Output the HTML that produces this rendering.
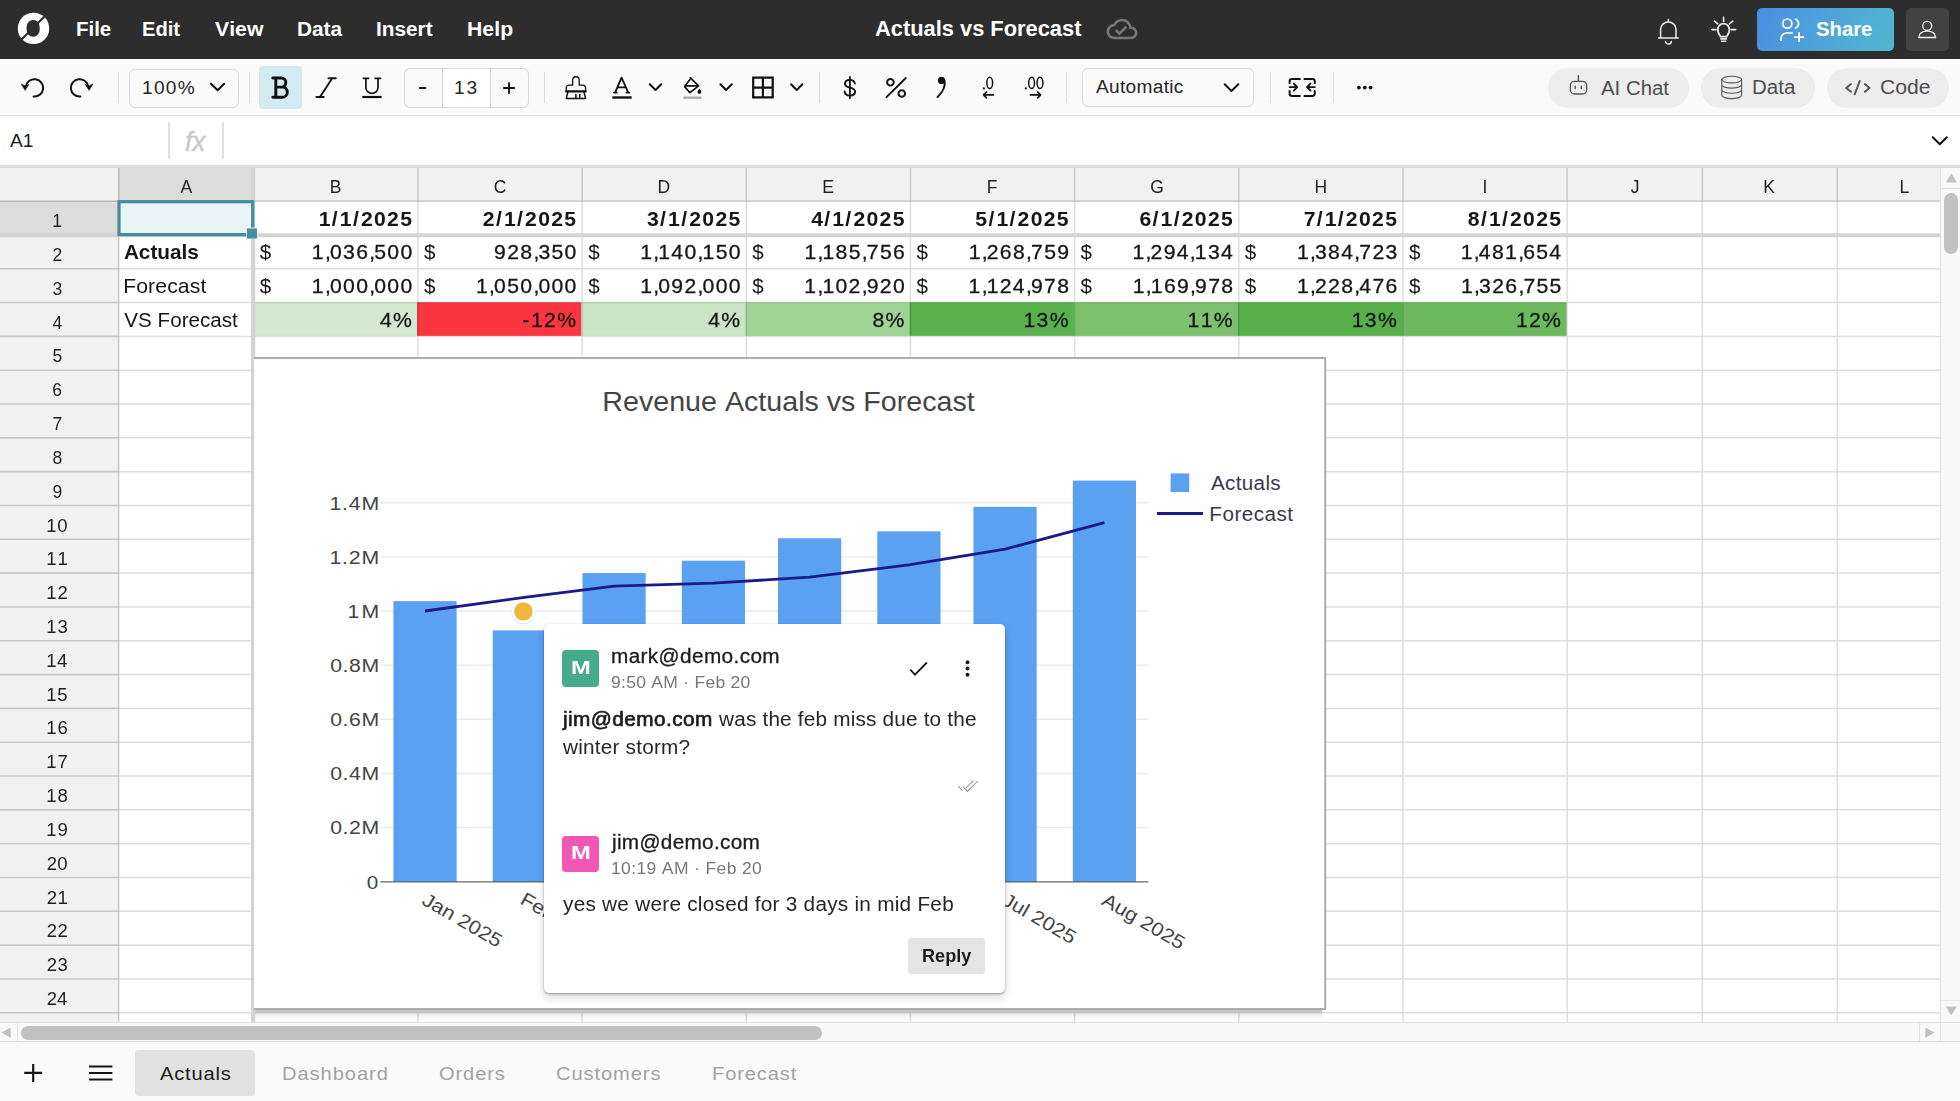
<!DOCTYPE html>
<html lang="en"><head><meta charset="utf-8"><title>Actuals vs Forecast</title>
<style>
html,body{margin:0;padding:0}
body{width:1960px;height:1101px;overflow:hidden;position:relative;background:#fff;font-family:"Liberation Sans",sans-serif;font-kerning:none}
.a{position:absolute}
.t{position:absolute;white-space:nowrap;line-height:1;transform-origin:0 50%}
.gl{will-change:transform}
svg{position:absolute;overflow:visible}
svg text{font-family:"Liberation Sans",sans-serif;font-kerning:none}
</style></head><body>
<div class="a" style="left:0px;top:0px;width:1960px;height:59px;background:#2d2d2d"></div>
<div class="a" style="left:1757.2px;top:7.9px;width:136.5px;height:42.9px;background:linear-gradient(115deg,#4a8de0 0%,#4fa6d8 55%,#51b8cf 100%);border-radius:5px"></div>
<div class="a" style="left:1906px;top:8px;width:43px;height:43px;background:#424242;border-radius:5px"></div>
<span class="t" style="left:75.53px;top:19.47px;font-size:20px;color:#ffffff;font-weight:700;transform:scaleX(1.0206);">File</span>
<span class="t" style="left:141.95px;top:19.47px;font-size:20px;color:#ffffff;font-weight:700;transform:scaleX(1.0058);">Edit</span>
<span class="t" style="left:214.86px;top:19.47px;font-size:20px;color:#ffffff;font-weight:700;letter-spacing:0.029px;transform:scaleX(1.0600);">View</span>
<span class="t" style="left:296.61px;top:19.47px;font-size:20px;color:#ffffff;font-weight:700;transform:scaleX(1.0394);">Data</span>
<span class="t" style="left:376.41px;top:19.47px;font-size:20px;color:#ffffff;font-weight:700;transform:scaleX(1.0382);">Insert</span>
<span class="t" style="left:466.58px;top:19.47px;font-size:20px;color:#ffffff;font-weight:700;letter-spacing:0.046px;transform:scaleX(1.0600);">Help</span>
<span class="t" style="left:875.46px;top:18.08px;font-size:22px;color:#ffffff;font-weight:700;transform:scaleX(0.9930);">Actuals vs Forecast</span>
<span class="t" style="left:1816.02px;top:19.27px;font-size:20px;color:#ffffff;font-weight:700;transform:scaleX(1.0142);">Share</span>
<div class="a" style="left:0px;top:59px;width:1960px;height:56px;background:#fafafa"></div>
<div class="a" style="left:0px;top:115px;width:1960px;height:1px;background:#dddddd"></div>
<div class="a" style="left:128.5px;top:68.5px;width:110px;height:39px;box-sizing:border-box;border:1px solid #d9d9d9;border-radius:6px;background:#fafafa"></div>
<span class="t" style="left:142.05px;top:79.06px;font-size:18px;color:#262626;letter-spacing:1.206px;transform:scaleX(1.0600);">100%</span>
<div class="a" style="left:259.3px;top:66.2px;width:43px;height:42.6px;background:#d3ebf0;border-radius:4px"></div>
<div class="a" style="left:404.2px;top:68.2px;width:124.5px;height:39.4px;box-sizing:border-box;border:1px solid #d9d9d9;border-radius:6px;background:#fafafa;overflow:hidden"></div>
<div class="a" style="left:442.2px;top:69.2px;width:48.4px;height:37.4px;background:#ffffff;border-left:1px solid #d9d9d9;border-right:1px solid #d9d9d9;box-sizing:border-box"></div>
<span class="t" style="left:454.25px;top:79.06px;font-size:18px;color:#262626;letter-spacing:1.669px;transform:scaleX(1.0600);">13</span>
<div class="a" style="left:1082.2px;top:68.2px;width:171.6px;height:38.6px;box-sizing:border-box;border:1px solid #d9d9d9;border-radius:6px;background:#fafafa"></div>
<span class="t" style="left:1095.76px;top:78.36px;font-size:18px;color:#262626;letter-spacing:0.295px;transform:scaleX(1.0600);">Automatic</span>
<div class="a" style="left:117.89999999999999px;top:72px;width:1.5px;height:31px;background:#dcdcdc"></div>
<div class="a" style="left:248.60000000000002px;top:72px;width:1.5px;height:31px;background:#dcdcdc"></div>
<div class="a" style="left:543.8px;top:72px;width:1.5px;height:31px;background:#dcdcdc"></div>
<div class="a" style="left:818.5px;top:72px;width:1.5px;height:31px;background:#dcdcdc"></div>
<div class="a" style="left:1065.5px;top:72px;width:1.5px;height:31px;background:#dcdcdc"></div>
<div class="a" style="left:1269.5px;top:72px;width:1.5px;height:31px;background:#dcdcdc"></div>
<div class="a" style="left:1332.7px;top:72px;width:1.5px;height:31px;background:#dcdcdc"></div>
<div class="a" style="left:1548px;top:68px;width:141px;height:40px;background:#ededed;border-radius:20px"></div>
<div class="a" style="left:1701px;top:68px;width:113.70000000000005px;height:40px;background:#ededed;border-radius:20px"></div>
<div class="a" style="left:1827px;top:68px;width:122px;height:40px;background:#ededed;border-radius:20px"></div>
<span class="t" style="left:1601.46px;top:77.57px;font-size:20px;color:#4d4d4d;transform:scaleX(1.0193);">AI Chat</span>
<span class="t" style="left:1752.22px;top:77.47px;font-size:20px;color:#4d4d4d;transform:scaleX(1.0245);">Data</span>
<span class="t" style="left:1879.52px;top:77.47px;font-size:20px;color:#4d4d4d;transform:scaleX(1.0586);">Code</span>
<div class="a" style="left:0px;top:116px;width:1960px;height:49px;background:#ffffff"></div>
<div class="a" style="left:0px;top:165px;width:1960px;height:3px;background:#dddddd"></div>
<span class="t" style="left:10.36px;top:132.14px;font-size:18.5px;color:#1a1a1a;transform:scaleX(1.0374);">A1</span>
<div class="a" style="left:168.3px;top:122.3px;width:1.7px;height:36.4px;background:#dedede"></div>
<div class="a" style="left:222.3px;top:122.3px;width:1.7px;height:36.4px;background:#dedede"></div>
<span class="t" style="left:185.01px;top:128.74px;font-size:27px;color:#c9c9c9;font-style:italic;transform:scaleX(0.9769);-webkit-text-stroke:0.4px #c9c9c9;">fx</span>
<svg width="1960" height="170" viewBox="0 0 1960 170" style="left:0;top:0"><circle cx="33.5" cy="28.4" r="15.7" fill="#ffffff"/><rect x="26.6" y="20" width="13.1" height="16.8" rx="6.3" ry="7.2" fill="#2d2d2d"/><path d="M16.5 44.6 L50.5 10.6" stroke="#2d2d2d" stroke-width="2.1" fill="none"/><path transform="translate(1106.6 13.56) scale(1.285)" fill="#787878" d="M19.35 10.04C18.67 6.59 15.64 4 12 4 9.11 4 6.6 5.64 5.35 8.04 2.34 8.36 0 10.91 0 14c0 3.31 2.69 6 6 6h13c2.76 0 5-2.24 5-5 0-2.64-2.05-4.78-4.65-4.96zM19 18H6c-2.21 0-4-1.79-4-4 0-2.05 1.53-3.76 3.56-3.97l1.07-.11.5-.95C8.08 7.14 9.94 6 12 6c2.62 0 4.88 1.86 5.39 4.43l.3 1.5 1.53.11c1.56.1 2.78 1.41 2.78 2.96 0 1.65-1.35 3-3 3zm-9-3.82l-2.09-2.09L6.500 13.5 10 17l6.010-6.010-1.410-1.410z"/><path d="M1660.6 37.6 V29.6 a7.7 7.7 0 0 1 15.4 0 V37.6 M1658.6 38 H1678.2 M1668.3 21.8 V19.6" stroke="#ececec" stroke-width="1.5" fill="none" stroke-linecap="round" stroke-linejoin="round"/><path d="M1665.5 41.4 a2.9 2.6 0 0 0 5.8 0" stroke="#ececec" stroke-width="1.5" fill="none" stroke-linecap="round" stroke-linejoin="round"/><path d="M1720.4 36.6 c-0.3 -1.6 -2.6 -3 -2.6 -7.2 a5.8 5.8 0 0 1 11.6 0 c0 4.2 -2.3 5.6 -2.6 7.2 z" stroke="#ececec" stroke-width="1.8" fill="none" stroke-linecap="round" stroke-linejoin="round"/><path d="M1720.9 38.9 H1726.4 M1721.6 41.2 H1725.7" stroke="#ececec" stroke-width="1.6" fill="none" stroke-linecap="round" stroke-linejoin="round"/><path d="M1723.6 17.2 V21.4 M1714.4 21.2 L1717.9 23.8 M1732.8 21.2 L1729.4 23.8 M1711.7 29.6 H1716 M1731.1 29.6 H1735.7" stroke="#ececec" stroke-width="1.6" fill="none" stroke-linecap="round" stroke-linejoin="round"/><circle cx="1787.3" cy="23.6" r="4.6" stroke="#fff" stroke-width="1.7" fill="none"/><path d="M1795.6 19.3 a4.6 4.6 0 0 1 0 8.6" stroke="#fff" stroke-width="1.7" fill="none" stroke-linecap="round" stroke-linejoin="round"/><path d="M1781 40.2 v-1.6 a5.6 5.6 0 0 1 5.6 -5.6 h5.8" stroke="#fff" stroke-width="1.7" fill="none" stroke-linecap="round" stroke-linejoin="round"/><path d="M1794.8 37.1 H1803.4 M1799.1 32.8 V41.3" stroke="#fff" stroke-width="1.8" fill="none" stroke-linecap="round" stroke-linejoin="round"/><circle cx="1927.2" cy="25.9" r="4.5" stroke="#f0f0f0" stroke-width="1.4" fill="none"/><path d="M1918.8 37.5 c0.3 -4.2 3.6 -6.4 8.4 -6.4 s8.1 2.2 8.4 6.4 z" stroke="#f0f0f0" stroke-width="1.4" fill="none" stroke-linecap="round" stroke-linejoin="round"/><path d="M33.6 96.5 A8.7 8.7 0 1 0 25.9 86.4" stroke="#111111" stroke-width="2" fill="none" stroke-linecap="round" stroke-linejoin="round"/><path d="M21.2 83.9 L25.1 90.4 L29.1 84.3 L25.5 85.9 Z" fill="#111111" stroke="#111111" stroke-width="0.5" stroke-linejoin="round"/><path d="M80.4 96.5 A8.7 8.7 0 1 1 88.1 86.4" stroke="#111111" stroke-width="2" fill="none" stroke-linecap="round" stroke-linejoin="round"/><path d="M93 83.9 L89.1 90.4 L85.1 84.3 L88.7 85.9 Z" fill="#111111" stroke="#111111" stroke-width="0.5" stroke-linejoin="round"/><path d="M211 83.7 L217.6 90.3 L224.2 83.7" stroke="#111111" stroke-width="2" fill="none" stroke-linecap="round" stroke-linejoin="round"/><path d="M272.8 78 H281.3 a4.5 4.5 0 0 1 0 9.1 H275.8 M275.8 87.1 H282.2 a5.1 5.1 0 0 1 0 10.2 H272.8 M275.8 78 V97.3" stroke="#111111" stroke-width="2.9" fill="none" stroke-linecap="round" stroke-linejoin="round"/><path d="M328.4 78.3 H335.8 M316.4 97 H323.8 M332.2 78.3 L320 97" stroke="#111111" stroke-width="1.9" fill="none" stroke-linecap="round" stroke-linejoin="round"/><path d="M363.4 78.3 H368.6 M375.2 78.3 H380.5 M365.9 78.3 V87.4 a6.05 6.05 0 0 0 12.1 0 V78.3" stroke="#111111" stroke-width="1.7" fill="none" stroke-linecap="round" stroke-linejoin="round"/><path d="M362.3 97 H381.6" stroke="#111111" stroke-width="2.2" fill="none" stroke-linecap="round" stroke-linejoin="round" style="stroke-linecap:butt"/><path d="M419.8 88 H425.5" stroke="#111111" stroke-width="1.8" fill="none" stroke-linecap="round" stroke-linejoin="round"/><path d="M503.8 88 H514.3 M509 82.8 V93.3" stroke="#111111" stroke-width="1.8" fill="none" stroke-linecap="round" stroke-linejoin="round"/><path d="M572.7 85.2 V80 a3.25 3.25 0 0 1 6.5 0 V85.2 H582.6 a3 3 0 0 1 3 3 V91.2 H566.2 V88.2 a3 3 0 0 1 3 -3 Z" stroke="#111111" stroke-width="1.3" fill="none" stroke-linecap="round" stroke-linejoin="round"/><path d="M566 91.4 H585.8" stroke="#111111" stroke-width="2" fill="none" stroke-linecap="round" stroke-linejoin="round"/><path d="M567.9 91.6 L566.3 98.4 H585.5 L583.9 91.6 M575.9 98.2 V94.4 M579.8 98.2 V94.4" stroke="#111111" stroke-width="1.5" fill="none" stroke-linecap="round" stroke-linejoin="round"/><path d="M615.2 92.4 L621.6 77.6 L628.1 92.4 M618.2 87.3 H625 M613.9 92.6 H616.8 M626.4 92.6 H629.3" stroke="#111111" stroke-width="1.8" fill="none" stroke-linecap="round" stroke-linejoin="round"/><path d="M612.3 97.5 H631.7" stroke="#111111" stroke-width="2.4" fill="none" stroke-linecap="round" stroke-linejoin="round" style="stroke-linecap:butt"/><path d="M649.8 84.3 L655.5 90 L661.2 84.3" stroke="#111111" stroke-width="2" fill="none" stroke-linecap="round" stroke-linejoin="round"/><path d="M720.4 84.3 L726.1 90 L731.8000000000001 84.3" stroke="#111111" stroke-width="2" fill="none" stroke-linecap="round" stroke-linejoin="round"/><path d="M791.0 84.3 L796.7 90 L802.4000000000001 84.3" stroke="#111111" stroke-width="2" fill="none" stroke-linecap="round" stroke-linejoin="round"/><path d="M690.9 78.3 L698.6 85.9 L690 92.7 L684.6 86.6 Z M685.4 85.9 H698 M690.3 77.7 L692.8 80.2" stroke="#111111" stroke-width="1.7" fill="none" stroke-linecap="round" stroke-linejoin="round"/><path d="M699.4 88.4 c1.2 1.6 1.9 2.6 1.9 3.5 a1.9 1.9 0 0 1 -3.8 0 c0 -0.9 0.7 -1.9 1.9 -3.5z" fill="#111111"/><path d="M683.4 97.7 H701.6" stroke="#a9a9a9" stroke-width="2.3" fill="none" stroke-linecap="round" stroke-linejoin="round" style="stroke-linecap:butt"/><path d="M753.2 77.7 H772.7 V97.4 H753.2 Z M762.9 77.7 V97.4 M753.2 87.6 H772.7" stroke="#111111" stroke-width="2.2" fill="none" stroke-linecap="round" stroke-linejoin="round" style="stroke-linecap:butt;stroke-linejoin:miter"/><path d="M849.9 76.9 V98.3" stroke="#111111" stroke-width="1.8" fill="none" stroke-linecap="round" stroke-linejoin="round"/><path d="M854.9 83.6 C854.3 80.8 852 79.9 849.9 79.9 C846.7 79.9 845 81.8 845 83.9 C845 88.9 855.1 86.4 855.1 91.6 C855.1 94 852.9 95.6 849.9 95.6 C846.9 95.6 844.9 94 844.6 91.4" stroke="#111111" stroke-width="1.9" fill="none" stroke-linecap="round" stroke-linejoin="round"/><path d="M905.8 78 L886.5 97.2" stroke="#111111" stroke-width="1.9" fill="none" stroke-linecap="round" stroke-linejoin="round"/><circle cx="890.4" cy="82.3" r="3.3" stroke="#111111" stroke-width="1.9" fill="none"/><circle cx="901.8" cy="93.5" r="3.3" stroke="#111111" stroke-width="1.9" fill="none"/><circle cx="941.5" cy="80.4" r="3.6" fill="#111111"/><path d="M944.6 81 C945.6 87.5 942.2 92.6 937.6 97" stroke="#111111" stroke-width="2" fill="none" stroke-linecap="round" stroke-linejoin="round"/><circle cx="983.9" cy="88.4" r="1.1" fill="#111111"/><ellipse cx="989.7" cy="82.9" rx="2.9" ry="5.6" stroke="#111111" stroke-width="1.5" fill="none"/><path d="M993.4 94.9 H983.8 M986.5 92 L983.6 94.9 L986.5 97.8" stroke="#111111" stroke-width="1.7" fill="none" stroke-linecap="round" stroke-linejoin="round"/><circle cx="1025.8" cy="88.4" r="1.1" fill="#111111"/><ellipse cx="1031.6" cy="82.9" rx="2.9" ry="5.6" stroke="#111111" stroke-width="1.5" fill="none"/><ellipse cx="1040" cy="82.9" rx="2.9" ry="5.6" stroke="#111111" stroke-width="1.5" fill="none"/><path d="M1030.5 94.9 H1040.4 M1037.7 92 L1040.6 94.9 L1037.7 97.8" stroke="#111111" stroke-width="1.7" fill="none" stroke-linecap="round" stroke-linejoin="round"/><path d="M1224.7 84.2 L1231.5 91 L1238.3 84.2" stroke="#111111" stroke-width="2" fill="none" stroke-linecap="round" stroke-linejoin="round"/><path d="M1299.9 79.1 H1292 a2.4 2.4 0 0 0 -2.4 2.4 V83.2 M1289.6 91 V93.5 a2.4 2.4 0 0 0 2.4 2.4 H1299.9 M1304.4 79.1 H1312.4 a2.4 2.4 0 0 1 2.4 2.4 V83.2 M1314.8 91 V93.5 a2.4 2.4 0 0 1 -2.4 2.4 H1304.4" stroke="#111111" stroke-width="2" fill="none" stroke-linecap="round" stroke-linejoin="round"/><path d="M1289.6 87.1 H1297 M1293.8 83.6 L1297.3 87.1 L1293.8 90.6 M1314.8 87.1 H1307.4 M1310.5 83.6 L1307 87.1 L1310.5 90.6" stroke="#111111" stroke-width="1.9" fill="none" stroke-linecap="round" stroke-linejoin="round"/><circle cx="1358.9" cy="87.6" r="1.9" fill="#111111"/><circle cx="1364.8" cy="87.6" r="1.9" fill="#111111"/><circle cx="1370.6" cy="87.6" r="1.9" fill="#111111"/><rect x="1570.4" y="81.3" width="16.2" height="12.7" rx="4" stroke="#555555" stroke-width="1.3" fill="none"/><path d="M1578.4 75.8 V81 M1575.3 86.3 V88.6 M1581.3 86.3 V88.6" stroke="#555555" stroke-width="1.4" fill="none" stroke-linecap="round" stroke-linejoin="round"/><ellipse cx="1731.7" cy="79.6" rx="9.9" ry="3.3" stroke="#555555" stroke-width="1.1" fill="none"/><path d="M1721.8 79.6 V95.3 a9.9 3.3 0 0 0 19.8 0 V79.6 M1721.8 84.8 a9.9 3.3 0 0 0 19.8 0 M1721.8 90 a9.9 3.3 0 0 0 19.8 0" stroke="#555555" stroke-width="1.1" fill="none" stroke-linecap="round" stroke-linejoin="round"/><path d="M1851 84 L1846.2 87.9 L1851 91.8 M1859.8 80.9 L1854.7 94.3 M1864.8 84 L1869.6 87.9 L1864.8 91.8" stroke="#555555" stroke-width="1.9" fill="none" stroke-linecap="round" stroke-linejoin="round"/><path d="M1932.8 137.3 L1939.8 144.2 L1946.8 137.3" stroke="#111111" stroke-width="2" fill="none" stroke-linecap="round" stroke-linejoin="round"/></svg>
<div class="a gl" style="left:0;top:0;width:1960px;height:1101px"><svg width="1960" height="1101" viewBox="0 0 1960 1101" style="left:0;top:0"><defs><linearGradient id="sh" x1="0" y1="0" x2="0" y2="1"><stop offset="0" stop-color="#000" stop-opacity="0.09"/><stop offset="1" stop-color="#000" stop-opacity="0"/></linearGradient><clipPath id="gc"><rect x="0" y="168" width="1940" height="854"/></clipPath></defs><g clip-path="url(#gc)"><rect x="0" y="168.0" width="1940" height="854.0" fill="#ffffff"/><rect x="0" y="168.0" width="1940" height="33.099999999999994" fill="#f1f1f1"/><rect x="0" y="168.0" width="118.7" height="854.0" fill="#f1f1f1"/><rect x="118.7" y="168.0" width="135.14" height="33.099999999999994" fill="#dcdcdc"/><rect x="0" y="201.1" width="118.7" height="33.82" fill="#dcdcdc"/><rect x="252.94" y="302.26" width="164.46" height="33.62" fill="#d5e8d0"/><rect x="417.10" y="302.26" width="164.46" height="33.62" fill="#fb3640"/><rect x="581.26" y="302.26" width="164.46" height="33.62" fill="#cbe5c6"/><rect x="745.42" y="302.26" width="164.46" height="33.62" fill="#a0d396"/><rect x="909.58" y="302.26" width="164.46" height="33.62" fill="#5ab14b"/><rect x="1073.74" y="302.26" width="164.46" height="33.62" fill="#7bc16e"/><rect x="1237.90" y="302.26" width="164.46" height="33.62" fill="#59b04a"/><rect x="1402.06" y="302.26" width="164.46" height="33.62" fill="#6cb85c"/><path d="M118.7 234.92H1940M118.7 268.74H1940M118.7 302.56H1940M118.7 336.38H1940M118.7 370.20H1940M118.7 404.02H1940M118.7 437.84H1940M118.7 471.66H1940M118.7 505.48H1940M118.7 539.30H1940M118.7 573.12H1940M118.7 606.94H1940M118.7 640.76H1940M118.7 674.58H1940M118.7 708.40H1940M118.7 742.22H1940M118.7 776.04H1940M118.7 809.86H1940M118.7 843.68H1940M118.7 877.50H1940M118.7 911.32H1940M118.7 945.14H1940M118.7 978.96H1940M118.7 1012.78H1940M253.84 201.1V1022M418.00 201.1V1022M582.16 201.1V1022M746.32 201.1V1022M910.48 201.1V1022M1074.64 201.1V1022M1238.80 201.1V1022M1402.96 201.1V1022M1567.12 201.1V1022M1702.30 201.1V1022M1837.30 201.1V1022" stroke="#000" stroke-opacity="0.135" stroke-width="1.5" fill="none"/><path d="M0 201.10H118.7M0 234.92H118.7M0 268.74H118.7M0 302.56H118.7M0 336.38H118.7M0 370.20H118.7M0 404.02H118.7M0 437.84H118.7M0 471.66H118.7M0 505.48H118.7M0 539.30H118.7M0 573.12H118.7M0 606.94H118.7M0 640.76H118.7M0 674.58H118.7M0 708.40H118.7M0 742.22H118.7M0 776.04H118.7M0 809.86H118.7M0 843.68H118.7M0 877.50H118.7M0 911.32H118.7M0 945.14H118.7M0 978.96H118.7M0 1012.78H118.7M118.70 168.0V201.1M253.84 168.0V201.1M418.00 168.0V201.1M582.16 168.0V201.1M746.32 168.0V201.1M910.48 168.0V201.1M1074.64 168.0V201.1M1238.80 168.0V201.1M1402.96 168.0V201.1M1567.12 168.0V201.1M1702.30 168.0V201.1M1837.30 168.0V201.1M118.7 201.1V1022M118.7 201.1H1940" stroke="#000" stroke-opacity="0.17" stroke-width="1.6" fill="none"/><rect x="0" y="233.3" width="1940" height="3.9" fill="#d3d3d3"/><rect x="251.1" y="168.0" width="4.1" height="854.0" fill="#d3d3d3"/><text x="180.43" y="192.90" font-size="17.5" fill="#1f1f1f">A</text><text x="329.83" y="192.90" font-size="17.5" fill="#1f1f1f">B</text><text x="493.65" y="192.90" font-size="17.5" fill="#1f1f1f">C</text><text x="657.62" y="192.90" font-size="17.5" fill="#1f1f1f">D</text><text x="822.22" y="192.90" font-size="17.5" fill="#1f1f1f">E</text><text x="986.85" y="192.90" font-size="17.5" fill="#1f1f1f">F</text><text x="1150.13" y="192.90" font-size="17.5" fill="#1f1f1f">G</text><text x="1314.56" y="192.90" font-size="17.5" fill="#1f1f1f">H</text><text x="1482.61" y="192.90" font-size="17.5" fill="#1f1f1f">I</text><text x="1630.85" y="192.90" font-size="17.5" fill="#1f1f1f">J</text><text x="1763.34" y="192.90" font-size="17.5" fill="#1f1f1f">K</text><text x="1899.51" y="192.90" font-size="17.5" fill="#1f1f1f">L</text><text x="52.19" y="227.12" font-size="17.5" fill="#1f1f1f">1</text><text x="52.43" y="260.94" font-size="17.5" fill="#1f1f1f">2</text><text x="52.48" y="294.76" font-size="17.5" fill="#1f1f1f">3</text><text x="52.49" y="328.58" font-size="17.5" fill="#1f1f1f">4</text><text x="52.45" y="362.40" font-size="17.5" fill="#1f1f1f">5</text><text x="52.37" y="396.22" font-size="17.5" fill="#1f1f1f">6</text><text x="52.43" y="430.04" font-size="17.5" fill="#1f1f1f">7</text><text x="52.43" y="463.86" font-size="17.5" fill="#1f1f1f">8</text><text x="52.44" y="497.68" font-size="17.5" fill="#1f1f1f">9</text><text transform="translate(46.29 531.50) scale(1.0600 1)" font-size="17.5" fill="#1f1f1f" letter-spacing="0.664">10</text><text transform="translate(46.29 565.32) scale(1.0600 1)" font-size="17.5" fill="#1f1f1f" letter-spacing="0.835">11</text><text transform="translate(46.29 599.14) scale(1.0600 1)" font-size="17.5" fill="#1f1f1f" letter-spacing="0.861">12</text><text transform="translate(46.29 632.96) scale(1.0600 1)" font-size="17.5" fill="#1f1f1f" letter-spacing="0.750">13</text><text transform="translate(46.29 666.78) scale(1.0600 1)" font-size="17.5" fill="#1f1f1f" letter-spacing="0.494">14</text><text transform="translate(46.29 700.60) scale(1.0600 1)" font-size="17.5" fill="#1f1f1f" letter-spacing="0.716">15</text><text transform="translate(46.29 734.42) scale(1.0600 1)" font-size="17.5" fill="#1f1f1f" letter-spacing="0.750">16</text><text transform="translate(46.29 768.24) scale(1.0600 1)" font-size="17.5" fill="#1f1f1f" letter-spacing="0.861">17</text><text transform="translate(46.29 802.06) scale(1.0600 1)" font-size="17.5" fill="#1f1f1f" letter-spacing="0.741">18</text><text transform="translate(46.29 835.88) scale(1.0600 1)" font-size="17.5" fill="#1f1f1f" letter-spacing="0.810">19</text><text transform="translate(46.77 869.70) scale(1.0600 1)" font-size="17.5" fill="#1f1f1f" letter-spacing="0.212">20</text><text transform="translate(46.77 903.52) scale(1.0600 1)" font-size="17.5" fill="#1f1f1f" letter-spacing="0.382">21</text><text transform="translate(46.77 937.34) scale(1.0600 1)" font-size="17.5" fill="#1f1f1f" letter-spacing="0.408">22</text><text transform="translate(46.77 971.16) scale(1.0600 1)" font-size="17.5" fill="#1f1f1f" letter-spacing="0.297">23</text><text transform="translate(46.77 1004.98) scale(1.0600 1)" font-size="17.5" fill="#1f1f1f" letter-spacing="0.041">24</text><text transform="scale(1.06 1)" x="300.66 313.02 320.57 332.92 340.47 352.83 365.19 377.55" y="226.01" font-size="20" fill="#161616" font-weight="700">1/1/2025</text><text transform="scale(1.06 1)" x="294.19 306.54 311.26 323.62 335.98 348.34 353.05 365.41 377.77" y="259.13" font-size="20" fill="#161616" stroke="#161616" stroke-width="0.3">1,036,500</text><text transform="scale(1.06 1)" x="294.19 306.54 311.26 323.62 335.98 348.34 353.05 365.41 377.77" y="292.95" font-size="20" fill="#161616" stroke="#161616" stroke-width="0.3">1,000,000</text><text transform="scale(1.06 1)" x="358.40 370.76" y="326.77" font-size="20" fill="#161616" stroke="#161616" stroke-width="0.3">4%</text><text transform="translate(259.82 259.13) scale(1.0297 1)" font-size="20" fill="#161616">$</text><text transform="translate(259.82 292.95) scale(1.0297 1)" font-size="20" fill="#161616">$</text><text transform="scale(1.06 1)" x="455.53 467.89 475.43 487.79 495.34 507.70 520.06 532.41" y="226.01" font-size="20" fill="#161616" font-weight="700">2/1/2025</text><text transform="scale(1.06 1)" x="466.13 478.49 490.85 503.21 507.92 520.28 532.64" y="259.13" font-size="20" fill="#161616" stroke="#161616" stroke-width="0.3">928,350</text><text transform="scale(1.06 1)" x="449.05 461.41 466.13 478.49 490.85 503.21 507.92 520.28 532.64" y="292.95" font-size="20" fill="#161616" stroke="#161616" stroke-width="0.3">1,050,000</text><text transform="scale(1.06 1)" x="492.70 500.91 513.27 525.63" y="326.77" font-size="20" fill="#161616" stroke="#161616" stroke-width="0.3">-12%</text><text transform="translate(423.98 259.13) scale(1.0297 1)" font-size="20" fill="#161616">$</text><text transform="translate(423.98 292.95) scale(1.0297 1)" font-size="20" fill="#161616">$</text><text transform="scale(1.06 1)" x="610.40 622.75 630.30 642.66 650.21 662.57 674.92 687.28" y="226.01" font-size="20" fill="#161616" font-weight="700">3/1/2025</text><text transform="scale(1.06 1)" x="603.92 616.28 621.00 633.36 645.71 658.07 662.79 675.15 687.51" y="259.13" font-size="20" fill="#161616" stroke="#161616" stroke-width="0.3">1,140,150</text><text transform="scale(1.06 1)" x="603.92 616.28 621.00 633.36 645.71 658.07 662.79 675.15 687.51" y="292.95" font-size="20" fill="#161616" stroke="#161616" stroke-width="0.3">1,092,000</text><text transform="scale(1.06 1)" x="668.14 680.50" y="326.77" font-size="20" fill="#161616" stroke="#161616" stroke-width="0.3">4%</text><text transform="translate(588.14 259.13) scale(1.0297 1)" font-size="20" fill="#161616">$</text><text transform="translate(588.14 292.95) scale(1.0297 1)" font-size="20" fill="#161616">$</text><text transform="scale(1.06 1)" x="765.26 777.62 785.17 797.53 805.08 817.43 829.79 842.15" y="226.01" font-size="20" fill="#161616" font-weight="700">4/1/2025</text><text transform="scale(1.06 1)" x="758.89 771.25 775.96 788.32 800.68 813.04 817.76 830.11 842.47" y="259.13" font-size="20" fill="#161616" stroke="#161616" stroke-width="0.3">1,185,756</text><text transform="scale(1.06 1)" x="758.79 771.15 775.87 788.22 800.58 812.94 817.66 830.02 842.38" y="292.95" font-size="20" fill="#161616" stroke="#161616" stroke-width="0.3">1,102,920</text><text transform="scale(1.06 1)" x="823.01 835.36" y="326.77" font-size="20" fill="#161616" stroke="#161616" stroke-width="0.3">8%</text><text transform="translate(752.30 259.13) scale(1.0297 1)" font-size="20" fill="#161616">$</text><text transform="translate(752.30 292.95) scale(1.0297 1)" font-size="20" fill="#161616">$</text><text transform="scale(1.06 1)" x="920.13 932.49 940.04 952.40 959.94 972.30 984.66 997.02" y="226.01" font-size="20" fill="#161616" font-weight="700">5/1/2025</text><text transform="scale(1.06 1)" x="913.82 926.18 930.90 943.26 955.62 967.98 972.69 985.05 997.41" y="259.13" font-size="20" fill="#161616" stroke="#161616" stroke-width="0.3">1,268,759</text><text transform="scale(1.06 1)" x="913.75 926.10 930.82 943.18 955.54 967.90 972.61 984.97 997.33" y="292.95" font-size="20" fill="#161616" stroke="#161616" stroke-width="0.3">1,124,978</text><text transform="scale(1.06 1)" x="965.51 977.87 990.23" y="326.77" font-size="20" fill="#161616" stroke="#161616" stroke-width="0.3">13%</text><text transform="translate(916.46 259.13) scale(1.0297 1)" font-size="20" fill="#161616">$</text><text transform="translate(916.46 292.95) scale(1.0297 1)" font-size="20" fill="#161616">$</text><text transform="scale(1.06 1)" x="1075.00 1087.36 1094.91 1107.26 1114.81 1127.17 1139.53 1151.89" y="226.01" font-size="20" fill="#161616" font-weight="700">6/1/2025</text><text transform="scale(1.06 1)" x="1068.33 1080.69 1085.41 1097.76 1110.12 1122.48 1127.20 1139.56 1151.92" y="259.13" font-size="20" fill="#161616" stroke="#161616" stroke-width="0.3">1,294,134</text><text transform="scale(1.06 1)" x="1068.61 1080.97 1085.69 1098.05 1110.41 1122.76 1127.48 1139.84 1152.20" y="292.95" font-size="20" fill="#161616" stroke="#161616" stroke-width="0.3">1,169,978</text><text transform="scale(1.06 1)" x="1120.38 1132.74 1145.10" y="326.77" font-size="20" fill="#161616" stroke="#161616" stroke-width="0.3">11%</text><text transform="translate(1080.62 259.13) scale(1.0297 1)" font-size="20" fill="#161616">$</text><text transform="translate(1080.62 292.95) scale(1.0297 1)" font-size="20" fill="#161616">$</text><text transform="scale(1.06 1)" x="1229.87 1242.23 1249.77 1262.13 1269.68 1282.04 1294.40 1306.75" y="226.01" font-size="20" fill="#161616" font-weight="700">7/1/2025</text><text transform="scale(1.06 1)" x="1223.49 1235.85 1240.57 1252.93 1265.28 1277.64 1282.36 1294.72 1307.08" y="259.13" font-size="20" fill="#161616" stroke="#161616" stroke-width="0.3">1,384,723</text><text transform="scale(1.06 1)" x="1223.49 1235.85 1240.57 1252.93 1265.28 1277.64 1282.36 1294.72 1307.08" y="292.95" font-size="20" fill="#161616" stroke="#161616" stroke-width="0.3">1,228,476</text><text transform="scale(1.06 1)" x="1275.25 1287.61 1299.97" y="326.77" font-size="20" fill="#161616" stroke="#161616" stroke-width="0.3">13%</text><text transform="translate(1244.78 259.13) scale(1.0297 1)" font-size="20" fill="#161616">$</text><text transform="translate(1244.78 292.95) scale(1.0297 1)" font-size="20" fill="#161616">$</text><text transform="scale(1.06 1)" x="1384.74 1397.09 1404.64 1417.00 1424.55 1436.91 1449.26 1461.62" y="226.01" font-size="20" fill="#161616" font-weight="700">8/1/2025</text><text transform="scale(1.06 1)" x="1378.07 1390.43 1395.14 1407.50 1419.86 1432.22 1436.93 1449.29 1461.65" y="259.13" font-size="20" fill="#161616" stroke="#161616" stroke-width="0.3">1,481,654</text><text transform="scale(1.06 1)" x="1378.32 1390.68 1395.40 1407.75 1420.11 1432.47 1437.19 1449.55 1461.91" y="292.95" font-size="20" fill="#161616" stroke="#161616" stroke-width="0.3">1,326,755</text><text transform="scale(1.06 1)" x="1430.12 1442.48 1454.84" y="326.77" font-size="20" fill="#161616" stroke="#161616" stroke-width="0.3">12%</text><text transform="translate(1408.94 259.13) scale(1.0297 1)" font-size="20" fill="#161616">$</text><text transform="translate(1408.94 292.95) scale(1.0297 1)" font-size="20" fill="#161616">$</text><text transform="translate(123.88 259.13) scale(1.0391 1)" font-size="20" fill="#161616" font-weight="700">Actuals</text><text transform="translate(123.16 292.95) scale(1.0600 1)" font-size="20" fill="#161616" letter-spacing="0.097">Forecast</text><text transform="translate(124.31 326.77) scale(1.0327 1)" font-size="20" fill="#161616">VS Forecast</text><rect x="119" y="201.7" width="133.7" height="32.9" fill="#e9f4f6" stroke="#448c9b" stroke-width="3.2"/><rect x="246" y="227.6" width="11.4" height="11.4" fill="#ffffff"/><rect x="246.8" y="228.4" width="10.2" height="10.2" fill="#4590a0"/></g></svg></div>
<svg width="1960" height="1101" viewBox="0 0 1960 1101" style="left:0;top:0"><g clip-path="url(#gc)"><rect x="254" y="356.9" width="1072.2" height="653.1" fill="#ffffff"/><rect x="255" y="1010" width="1067.2" height="3" fill="#c6c6c6"/><rect x="255" y="1013" width="1067.2" height="6" fill="url(#sh)"/><path d="M254 357.9H1325.2V1009H254" fill="none" stroke="#adadad" stroke-width="2"/><text transform="translate(602.35 410.70) scale(1.0493 1)" font-size="27.3" fill="#444444">Revenue Actuals vs Forecast</text><path d="M380.3 827.60H1148.4M380.3 773.45H1148.4M380.3 719.30H1148.4M380.3 665.15H1148.4M380.3 611.00H1148.4M380.3 556.85H1148.4M380.3 502.70H1148.4" stroke="#e9e9e9" stroke-width="1.4" fill="none"/><text transform="translate(366.69 888.55) scale(1.0900 1)" font-size="19" fill="#444444">0</text><text transform="translate(330.17 834.40) scale(1.1200 1)" font-size="19" fill="#444444" letter-spacing="0.497">0.2M</text><text transform="translate(330.17 780.25) scale(1.1200 1)" font-size="19" fill="#444444" letter-spacing="0.497">0.4M</text><text transform="translate(330.17 726.10) scale(1.1200 1)" font-size="19" fill="#444444" letter-spacing="0.497">0.6M</text><text transform="translate(330.17 671.95) scale(1.1200 1)" font-size="19" fill="#444444" letter-spacing="0.497">0.8M</text><text transform="translate(347.58 617.80) scale(1.1200 1)" font-size="19" fill="#444444" letter-spacing="1.790">1M</text><text transform="translate(329.38 563.65) scale(1.1200 1)" font-size="19" fill="#444444" letter-spacing="0.732">1.2M</text><text transform="translate(329.38 509.50) scale(1.1200 1)" font-size="19" fill="#444444" letter-spacing="0.732">1.4M</text><rect x="393.40" y="601.12" width="63.2" height="280.63" fill="#5ba1f2"/><rect x="492.75" y="630.40" width="63.2" height="251.35" fill="#5ba1f2"/><rect x="582.48" y="573.05" width="63.2" height="308.70" fill="#5ba1f2"/><rect x="681.82" y="560.71" width="63.2" height="321.04" fill="#5ba1f2"/><rect x="777.97" y="538.23" width="63.2" height="343.52" fill="#5ba1f2"/><rect x="877.31" y="531.36" width="63.2" height="350.39" fill="#5ba1f2"/><rect x="973.45" y="506.84" width="63.2" height="374.91" fill="#5ba1f2"/><rect x="1072.80" y="480.59" width="63.2" height="401.16" fill="#5ba1f2"/><path d="M380.3 881.9H1148.4" stroke="#444444" stroke-width="1.0" fill="none"/><path d="M425.00 611.00 L524.35 597.46 L614.08 586.09 L713.42 583.13 L809.57 577.16 L908.91 564.98 L1005.05 549.14 L1104.40 522.53" stroke="#1c1a8a" stroke-width="2.8" fill="none" stroke-linejoin="round"/><g transform="translate(421.10 903.9) rotate(30) scale(1.12 1)"><text x="-0.30" y="0.00" font-size="19.2" fill="#444444">Jan 2025</text></g><g transform="translate(520.45 903.9) rotate(30) scale(1.12 1)"><text x="-1.57" y="0.00" font-size="19.2" fill="#444444">Feb 2025</text></g><g transform="translate(610.18 903.9) rotate(30) scale(1.12 1)"><text x="-1.57" y="0.00" font-size="19.2" fill="#444444">Mar 2025</text></g><g transform="translate(709.52 903.9) rotate(30) scale(1.12 1)"><text x="-0.04" y="0.00" font-size="19.2" fill="#444444">Apr 2025</text></g><g transform="translate(805.67 903.9) rotate(30) scale(1.12 1)"><text x="-1.57" y="0.00" font-size="19.2" fill="#444444">May 2025</text></g><g transform="translate(905.01 903.9) rotate(30) scale(1.12 1)"><text x="-0.30" y="0.00" font-size="19.2" fill="#444444">Jun 2025</text></g><g transform="translate(1001.15 903.9) rotate(30) scale(1.12 1)"><text x="-0.30" y="0.00" font-size="19.2" fill="#444444">Jul 2025</text></g><g transform="translate(1100.50 903.9) rotate(30) scale(1.12 1)"><text x="-0.04" y="0.00" font-size="19.2" fill="#444444">Aug 2025</text></g><rect x="1170.6" y="473.4" width="18.6" height="18.6" fill="#5ba1f2"/><path d="M1157 513.5H1203" stroke="#1c1a8a" stroke-width="2.8"/><text transform="translate(1210.96 490.20) scale(1.0600 1)" font-size="19.5" fill="#3a3a4a" letter-spacing="0.315">Actuals</text><text transform="translate(1209.30 521.20) scale(1.0600 1)" font-size="19.5" fill="#3a3a4a" letter-spacing="0.463">Forecast</text><circle cx="523.4" cy="612.6" r="12" fill="#000" opacity="0.10"/><circle cx="523.4" cy="611.4" r="11.8" fill="#ffffff"/><circle cx="523.4" cy="611.4" r="9.2" fill="#f2b53c"/></g></svg>
<div class="a gl" style="left:0;top:0;width:1960px;height:1101px">
<div class="a" style="left:544px;top:624.4px;width:461px;height:368.8px;background:#ffffff;border-radius:5px;box-shadow:0 1px 2.5px rgba(0,0,0,0.36),0 5px 10px rgba(0,0,0,0.14)"></div>
<div class="a" style="left:562.2px;top:650px;width:36.8px;height:37px;background:#45ab8a;border-radius:4px"></div>
<div class="a" style="left:562.3px;top:835.6px;width:36.7px;height:36.4px;background:#f257b6;border-radius:4px"></div>
<span class="t" style="left:571.01px;top:659.53px;font-size:17.8px;color:#ffffff;font-weight:700;transform:scaleX(1.3338);">M</span>
<span class="t" style="left:571.01px;top:844.83px;font-size:17.8px;color:#ffffff;font-weight:700;transform:scaleX(1.3338);">M</span>
<span class="t" style="left:610.62px;top:646.81px;font-size:19.6px;color:#1c1c1c;letter-spacing:0.346px;transform:scaleX(1.0600);-webkit-text-stroke:0.3px #1c1c1c;">mark@demo.com</span>
<span class="t" style="left:611.18px;top:673.93px;font-size:16.5px;color:#777777;letter-spacing:0.263px;transform:scaleX(1.0600);">9:50 AM · Feb 20</span>
<span class="t" style="left:563.41px;top:709.71px;font-size:19.6px;color:#1c1c1c;letter-spacing:0.415px;transform:scaleX(1.0600);-webkit-text-stroke:0.65px #1c1c1c;">jim@demo.com</span>
<span class="t" style="left:719.03px;top:709.71px;font-size:19.6px;color:#262626;letter-spacing:0.170px;transform:scaleX(1.0600);">was the feb miss due to the</span>
<span class="t" style="left:562.93px;top:737.51px;font-size:19.6px;color:#262626;letter-spacing:0.193px;transform:scaleX(1.0600);">winter storm?</span>
<span class="t" style="left:612.21px;top:833.21px;font-size:19.6px;color:#1c1c1c;letter-spacing:0.278px;transform:scaleX(1.0600);-webkit-text-stroke:0.3px #1c1c1c;">jim@demo.com</span>
<span class="t" style="left:610.67px;top:860.23px;font-size:16.5px;color:#777777;letter-spacing:0.351px;transform:scaleX(1.0600);">10:19 AM · Feb 20</span>
<span class="t" style="left:562.95px;top:895.01px;font-size:19.6px;color:#262626;letter-spacing:0.236px;transform:scaleX(1.0600);">yes we were closed for 3 days in mid Feb</span>
<div class="a" style="left:908.1px;top:938.1px;width:77.4px;height:36.4px;background:#e4e4e4;border-radius:4px"></div>
<span class="t" style="left:921.69px;top:946.84px;font-size:18.5px;color:#1c1c1c;font-weight:700;transform:scaleX(0.9788);">Reply</span>
<svg width="480" height="380" viewBox="540 620 480 380" style="left:540px;top:620px"><path d="M910.3 669.7 L915 674.6 L926.9 662.5" stroke="#1a1a1a" stroke-width="1.8" fill="none"/><circle cx="967.5" cy="662.3" r="1.95" fill="#1a1a1a"/><circle cx="967.5" cy="668.5" r="1.95" fill="#1a1a1a"/><circle cx="967.5" cy="674.8" r="1.95" fill="#1a1a1a"/><path d="M958.3 786.1 L962.5 791 M963.4 786.8 L967.4 791.4 L977.8 781 M965.9 788 L973.3 780.6" stroke="#8f8f8f" stroke-width="1.05" fill="none"/></svg>
</div>
<div class="a" style="left:1940px;top:168px;width:20px;height:854px;background:#f9f9f9;border-left:1px solid #e1e1e1;box-sizing:border-box"></div>
<div class="a" style="left:1940px;top:188px;width:20px;height:1px;background:#e4e4e4"></div>
<div class="a" style="left:1940px;top:1000px;width:20px;height:1px;background:#e4e4e4"></div>
<div class="a" style="left:1944.3px;top:192.7px;width:14px;height:61px;background:#c1c1c1;border-radius:7px"></div>
<div class="a" style="left:0px;top:1022px;width:1960px;height:19px;background:#f9f9f9;border-top:1px solid #e1e1e1;box-sizing:border-box"></div>
<div class="a" style="left:17px;top:1022px;width:1px;height:19px;background:#e4e4e4"></div>
<div class="a" style="left:1919px;top:1022px;width:1px;height:19px;background:#e4e4e4"></div>
<div class="a" style="left:1940px;top:1022px;width:1px;height:19px;background:#e4e4e4"></div>
<div class="a" style="left:21.4px;top:1026px;width:800.5px;height:13.6px;background:#c1c1c1;border-radius:7px"></div>
<div class="a" style="left:0px;top:1041px;width:1960px;height:60px;background:#fafafa;border-top:1px solid #dadada;box-sizing:border-box"></div>
<div class="a" style="left:134.6px;top:1050.3px;width:120.4px;height:45.8px;background:#e1e1e1;border-radius:4px"></div>
<span class="t" style="left:160.26px;top:1063.62px;font-size:19px;color:#1a1a1a;letter-spacing:0.742px;transform:scaleX(1.0600);">Actuals</span>
<span class="t" style="left:282.25px;top:1063.62px;font-size:19px;color:#a2a2a2;letter-spacing:0.864px;transform:scaleX(1.0600);">Dashboard</span>
<span class="t" style="left:438.95px;top:1063.62px;font-size:19px;color:#a2a2a2;letter-spacing:0.817px;transform:scaleX(1.0600);">Orders</span>
<span class="t" style="left:556.38px;top:1063.62px;font-size:19px;color:#a2a2a2;letter-spacing:0.847px;transform:scaleX(1.0600);">Customers</span>
<span class="t" style="left:712.35px;top:1063.62px;font-size:19px;color:#a2a2a2;letter-spacing:0.816px;transform:scaleX(1.0600);">Forecast</span>
<svg width="1960" height="1101" viewBox="0 0 1960 1101" style="left:0;top:0"><path d="M24.2 1072.9 H42.2 M33.2 1063.9 V1081.9" stroke="#161616" stroke-width="2.2" fill="none"/><path d="M89 1066.5 H112.4 M89 1073 H112.4 M89 1079.5 H112.4" stroke="#161616" stroke-width="2.2" fill="none"/><path d="M1945.8 182.4 L1951.3 173.2 L1956.8 182.4 Z" fill="#c1c1c1"/><path d="M1945.8 1006.4 L1951.3 1015.6 L1956.8 1006.4 Z" fill="#c1c1c1"/><path d="M10.6 1027.4 L1.4 1032.6 L10.6 1037.8 Z" fill="#c1c1c1"/><path d="M1925.4 1027.4 L1934.6 1032.6 L1925.4 1037.8 Z" fill="#c1c1c1"/></svg>
</body></html>
